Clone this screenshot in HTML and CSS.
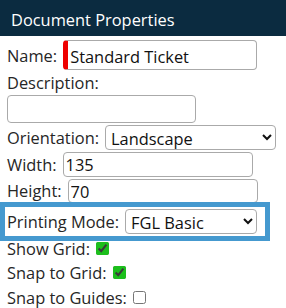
FILE: index.html
```html
<!DOCTYPE html>
<html>
<head>
<meta charset="utf-8">
<link rel="stylesheet" href="styles.css">
</head>
<body>
<div class="panel">
  <div class="header">Document Properties</div>
  <div class="form">
    <div class="field f-name"><label>Name:</label><input class="txt name" type="text" value="Standard Ticket"></div>
    <div class="field f-desc"><label>Description:</label><input class="txt desc" type="text" value=""></div>
    <div class="field f-orient"><label>Orientation:</label><select class="sel orient"><option>Landscape</option><option>Portrait</option></select></div>
    <div class="field f-width"><label>Width:</label><input class="txt small" type="text" value="135"></div>
    <div class="field f-height"><label>Height:</label><input class="txt small" type="text" value="70"></div>
    <div class="field f-mode highlight"><label>Printing Mode:</label><select class="sel mode"><option>FGL Basic</option></select></div>
    <div class="check"><label>Show Grid:</label> <input type="checkbox" checked></div>
    <div class="check"><label>Snap to Grid:</label> <input type="checkbox" checked></div>
    <div class="check"><label>Snap to Guides:</label> <input type="checkbox"></div>
  </div>
</div>
</body>
</html>
```
FILE: styles.css
```css
html, body {
  margin: 0;
  padding: 0;
  background: #fff;
}
body {
  font-family: "Open Sans", "Liberation Sans", sans-serif;
  font-size: 16.4px;
  color: #262626;
}
.header {
  box-sizing: border-box;
  background: #0b2b40;
  color: #fff;
  height: 36px;
  padding: 3px 0 0 11px;
  display: flex;
  align-items: center;
}
.form {
  padding: 4px 0 0 7px;
}
.field {
  display: flex;
  flex-wrap: wrap;
  align-items: center;
  column-gap: 6px;
  row-gap: 0;
}
.field label {
  line-height: 22px;
}
.f-name label {
  padding-top: 2px;
}
.txt {
  font: inherit;
  color: #111;
  border: 1px solid #aaa;
  border-radius: 4px;
  padding: 0 2px;
  margin: 0;
  box-sizing: border-box;
  background: #fff;
}
.name {
  width: 194px;
  height: 30px;
  border-left: 5px solid #e00;
  padding-top: 2px;
}
.f-desc { margin-top: 1px; }
.f-desc label { line-height: 24px; }
.desc {
  width: 189px;
  height: 28px;
}
.sel {
  font: inherit;
  color: #111;
  height: 25px;
  border: 1px solid #aaa;
  border-radius: 4px;
  background: #fff;
  margin: 0;
  padding: 0 1px;
}
.orient { width: 171px; }
.mode { width: 132px; }
.small {
  width: 190px;
  height: 25px;
}
.f-orient { margin-top: 2px; }
.f-width { margin-top: 2px; }
.f-height { margin-top: 2px; }
.f-height .small { height: 24px; }
.highlight {
  box-sizing: border-box;
  width: 260px;
  height: 29px;
  margin: 4px 0 0 -2px;
  padding: 0 2px;
  outline: 5px solid #4599cf;
}
.check {
  box-sizing: border-box;
  height: 24.5px;
  padding-top: 1.5px;
  line-height: 22px;
}
.check input {
  margin: 0 0 0 2px;
  width: 13px;
  height: 13px;
  accent-color: #1cbf1c;
  vertical-align: baseline;
}
```
